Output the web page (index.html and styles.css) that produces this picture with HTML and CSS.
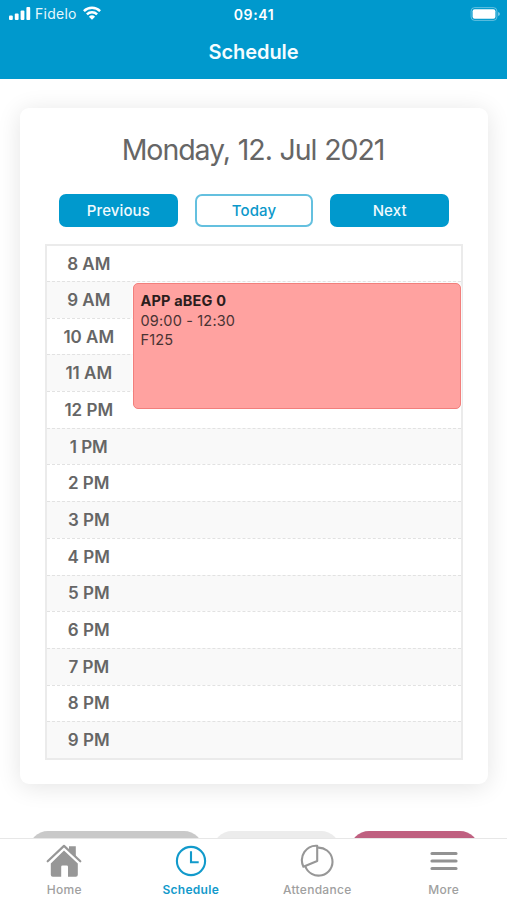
FILE: index.html
```html
<!DOCTYPE html>
<html lang="en">
<head>
<meta charset="utf-8">
<title>Schedule</title>
<link rel="stylesheet" href="styles.css">
</head>
<body>
<div class="app">
  <header class="header">
    <div class="status">
      <div class="carrier">
        <svg width="22" height="13" viewBox="0 0 22 13" fill="#fff"><rect x="0" y="8.6" width="3.8" height="4.4" rx="1"/><rect x="5.8" y="6.4" width="3.8" height="6.6" rx="1"/><rect x="11.6" y="3.5" width="3.8" height="9.5" rx="1"/><rect x="17.4" y="0" width="3.8" height="13" rx="1"/></svg>
        <span>Fidelo</span>
        <svg class="wifi" width="18" height="14" viewBox="0 0 18 14" fill="none" stroke="#fff" stroke-width="2.5"><path d="M.9 5.1a11.6 11.6 0 0 1 16.2 0M3.9 8.3a7.3 7.3 0 0 1 10.2 0"/><path d="M9 13.800 5.900 10.700a4.500 4.500 0 0 1 6.200 0z" fill="#fff" stroke="none"/></svg>
      </div>
      <div class="clock">09:41</div>
      <svg class="battery" width="30" height="14" viewBox="0 0 30 14"><rect x="1.1" y=".6" width="25.8" height="12.8" rx="3.5" fill="none" stroke="#fff" stroke-opacity=".38"/><rect x="2.600" y="2.200" width="22.800" height="9.600" rx="2" fill="#fff"/><path d="M28 5q2 .5 2 2t-2 2z" fill="#fff" fill-opacity=".45"/></svg>
    </div>
    <h1>Schedule</h1>
  </header>
  <main>
    <section class="card">
      <h2>Monday, 12. Jul 2021</h2>
      <div class="buttons">
        <button class="btn">Previous</button>
        <button class="btn outline">Today</button>
        <button class="btn">Next</button>
      </div>
      <div class="grid">
        <div class="row">8 AM</div>
        <div class="row">9 AM</div>
        <div class="row">10 AM</div>
        <div class="row">11 AM</div>
        <div class="row">12 PM</div>
        <div class="row">1 PM</div>
        <div class="row">2 PM</div>
        <div class="row">3 PM</div>
        <div class="row">4 PM</div>
        <div class="row">5 PM</div>
        <div class="row">6 PM</div>
        <div class="row">7 PM</div>
        <div class="row">8 PM</div>
        <div class="row">9 PM</div>
        <div class="event"><strong>APP aBEG 0</strong><span>09:00 - 12:30</span><span>F125</span></div>
      </div>
    </section>
    <div class="chips"><i class="chip grey"></i><i class="chip light"></i><i class="chip pink"></i></div>
  </main>
  <nav class="tabs">
    <a class="tab">
      <svg width="36" height="34" viewBox="0 0 36 34"><path d="M18 6.500 31.800 19.500V30.700q0 2-2 2H22v-10q0-1.300-1.300-1.300h-4.200q-1.300 0-1.300 1.300v10H6.800q-2 0-2-2V19.500z" fill="#979797"/><path d="M1.700 17.300 18 1.900 34.300 17.300" fill="none" stroke="#fff" stroke-width="4.600"/><path d="M23 2.300h6.800v10.800L23 7z" fill="#979797"/><path d="M1.700 17.300 18 1.900 34.300 17.300" fill="none" stroke="#979797" stroke-width="2.200" stroke-linecap="round" stroke-linejoin="round"/></svg>
      <span>Home</span>
    </a>
    <a class="tab active">
      <svg width="36" height="34" viewBox="0 0 36 34" fill="none" stroke="#129acb" stroke-width="2.100"><circle cx="18" cy="17" r="14.100"/><path d="M18 7.300V18.300H25.700"/></svg>
      <span>Schedule</span>
    </a>
    <a class="tab">
      <svg width="36" height="34" viewBox="0 0 36 34" fill="none" stroke="#979797" stroke-width="2.100" stroke-linejoin="round"><path d="M18.200 3.700A14 14 0 1 1 6.200 22"/><path d="M18.200 17V1.800C7.500 1 -.5 12 4.400 22.700z"/></svg>
      <span>Attendance</span>
    </a>
    <a class="tab">
      <svg width="36" height="34" viewBox="0 0 36 34" fill="none" stroke="#929292" stroke-width="3.200" stroke-linecap="round"><path d="M6 9.500H30M6 17H30M6 24.500H30"/></svg>
      <span>More</span>
    </a>
  </nav>
</div>
</body>
</html>
```

FILE: styles.css
```css
* { box-sizing: border-box; }
body { margin: 0; font-family: Inter, "Liberation Sans", sans-serif; background: #fff; }
.app { height: 900px; display: flex; flex-direction: column; overflow: hidden; }
.header { flex: none; height: 79px; background: #0099cd; color: #fff; }
.status { height: 27px; display: grid; grid-template-columns: 1fr auto 1fr; align-items: center; padding: 0 7px 0 9px; }
.carrier { display: flex; align-items: center; font-size: 14px; letter-spacing: .25px; color: #e6f7fc; }
.carrier span { margin: 0 0 0 4px; }
.wifi { margin-left: 6px; margin-top: -2px; }
.clock { font-size: 14px; font-weight: 600; letter-spacing: .6px; padding-top: 1px; margin-left: -1px; }
.battery { justify-self: end; }
h1 { margin: 12px 0 0; text-align: center; font-size: 20px; line-height: 26px; font-weight: 600; letter-spacing: -.05px; color: #f4fcff; }
main { flex: 1; min-height: 0; overflow: hidden; padding: 29px 19px 0 20px; }
.card { height: 676px; border-radius: 9px; background: #fff; box-shadow: 0 3px 24px rgba(0, 0, 0, .11); padding: 24px 25px 0; }
h2 { margin: 0 0 0 -2px; text-align: center; font-size: 28.500px; line-height: 36px; font-weight: 400; letter-spacing: -1.050px; word-spacing: .8px; color: #666; white-space: nowrap; }
.buttons { display: grid; grid-template-columns: repeat(3, 1fr); gap: 17px; margin: 26px 14px 17px; }
.btn { height: 33px; padding: 0; border: 2px solid #0099cd; border-radius: 7px; background: #0099cd; color: #f0fafd; font: 500 15px Inter, "Liberation Sans", sans-serif; letter-spacing: .1px; }
.btn.outline { background: #fff; color: #0c98ca; border-color: #64c0df; }
.grid { position: relative; height: 516px; border: 2px solid #ebebeb; display: grid; grid-template-rows: 35px repeat(13, 1fr); }
.row { border-top: 1px dashed #e2e2e2; padding-right: 330.500px; display: flex; align-items: center; justify-content: center; font-size: 17px; font-weight: 600; color: #666; white-space: nowrap; }
.row:first-child { border-top: 0; }
.row:nth-child(even) { background: #f9f9f9; }
.event { position: absolute; left: 86px; top: 37px; width: 328px; height: 126px; border: 1px solid #f27f7c; border-radius: 5px; background: #ffa2a0; box-shadow: 0 0 0 1px rgba(255, 255, 255, .7); padding: 7px 6.500px; display: flex; flex-direction: column; font-size: 14.500px; line-height: 19.500px; letter-spacing: .17px; color: #493333; }
.event strong { color: #2b1d1d; font-weight: 700; }
.chips { display: flex; padding: 46.500px 8px 0 9px; }
.chip { height: 38px; border-radius: 19px; }
.chip.grey { width: 174px; background: #c9c9c9; margin-right: 10px; }
.chip.light { width: 127px; background: #ececec; margin-right: 10px; }
.chip.pink { width: 129px; background: #bf6080; }
.tabs { flex: none; height: 62px; background: #fff; border-top: 1px solid #e7e7e7; display: grid; grid-template-columns: repeat(4, 126.500px); padding-left: 1px; }
.tab { display: flex; flex-direction: column; align-items: center; padding-top: 5px; font-size: 12px; line-height: 16px; font-weight: 500; letter-spacing: .3px; color: #a0a0a0; }
.tab span { margin-top: 4px; }
.tab.active { color: #129acb; font-weight: 600; }
```
